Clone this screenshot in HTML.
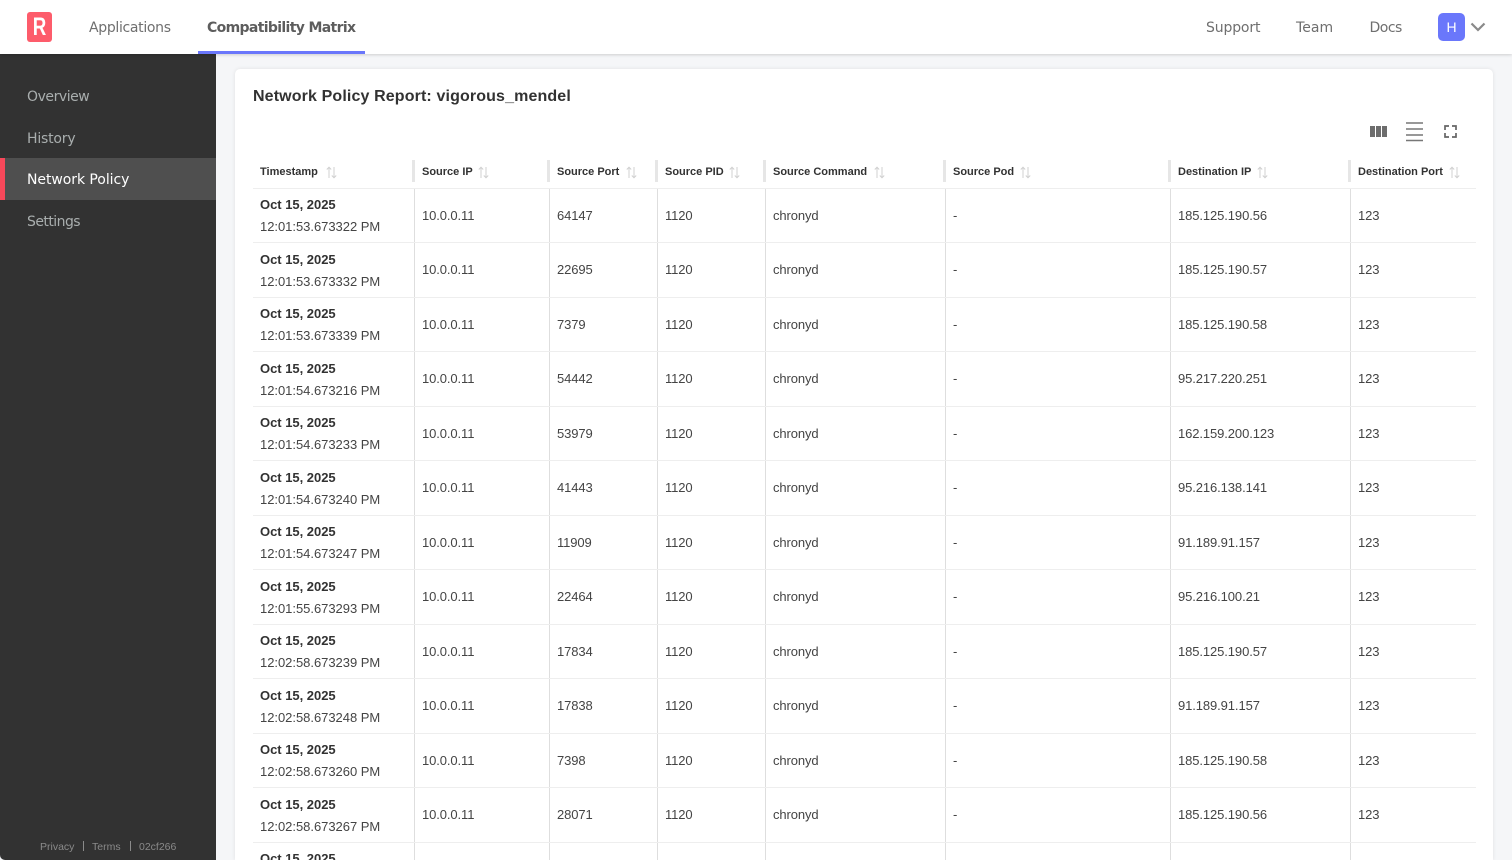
<!DOCTYPE html>
<html><head><meta charset="utf-8"><style>
*{box-sizing:border-box}
html,body{margin:0;padding:0;width:1512px;height:860px;overflow:hidden;background:#f5f6f8;font-family:"Liberation Sans",sans-serif}
#w{position:absolute;left:0;top:0;width:1512px;height:860px;overflow:hidden;background:#f5f6f8}
.a{position:absolute;white-space:nowrap}
.nav{font-family:"DejaVu Sans",sans-serif;font-size:14px;letter-spacing:-.15px;line-height:20px;color:#6f6f6f;margin-top:1px}
.side{font-family:"DejaVu Sans",sans-serif;font-size:14px;letter-spacing:-.2px;line-height:20px;color:#a9aeae;left:27px;margin-top:1px}
.h{font-size:11px;font-weight:bold;color:#323232;line-height:14px;top:164px;margin-top:1px;letter-spacing:0}
.d{font-size:13px;font-weight:bold;color:#323232;line-height:16px;left:260px;letter-spacing:-.02px;margin-top:1px}
.t{font-size:13px;color:#444;line-height:16px;left:260px;letter-spacing:-.03px;margin-top:1px}
.v{font-size:13px;color:#444;line-height:16px;letter-spacing:-.1px;margin-top:1px}
.l{position:absolute;left:253px;width:1223px;height:1px;background:#eeeeee}
.s{position:absolute;top:189px;width:1px;height:671px;background:#dedede}
.hs{position:absolute;top:160px;width:3px;height:22px;background:#e6e6e6}
.i{position:absolute;top:166px}
</style></head><body><div id="w">
<div class="a" style="left:235px;top:69px;width:1258px;height:791px;background:#fff;border-radius:5px 5px 0 0;box-shadow:0 0 4px rgba(0,0,0,.09)"></div>
<div class="a" style="left:0;top:54px;width:216px;height:806px;background:#323232;border-bottom-left-radius:5px"></div>
<div class="a" style="left:0;top:158px;width:216px;height:42px;background:#4f4f4f"></div>
<div class="a" style="left:0;top:158px;width:5px;height:42px;background:#f7485a"></div>
<div class="a" style="left:0;top:0;width:1512px;height:54px;background:#fff;box-shadow:0 1px 3px rgba(0,0,0,.16)"></div>
<div class="a" style="left:27px;top:12px;width:25px;height:30px;background:#fd5c6b;border-radius:3px"></div>
<div class="a" style="left:27px;top:12px;width:25px;height:30px;text-align:center;color:#fff;font-size:25px;font-weight:bold;line-height:30px;transform:scaleX(.75)">R</div>
<div class="a nav" style="left:89px;top:17px;letter-spacing:-.32px">Applications</div>
<div class="a nav" style="left:207px;top:17px;font-weight:bold;color:#5d5d5d;letter-spacing:-.65px">Compatibility Matrix</div>
<div class="a" style="left:198px;top:51px;width:167px;height:3px;background:#6a77fb"></div>
<div class="a nav" style="left:1206px;top:17px">Support</div>
<div class="a nav" style="left:1296px;top:17px;letter-spacing:.05px">Team</div>
<div class="a nav" style="left:1369.500px;top:17px;letter-spacing:-.5px">Docs</div>
<div class="a" style="left:1438px;top:13px;width:27px;height:28px;background:#6a77fb;border-radius:5px;color:#fff;font-size:14px;line-height:28px;text-align:center">H</div>
<svg class="a" style="left:1470px;top:22px" width="16" height="11" viewBox="0 0 16 11"><path d="M1.5 1.5L8 8L14.5 1.5" fill="none" stroke="#8a8a8a" stroke-width="2.2"/></svg>
<div class="a side" style="top:86px;letter-spacing:-.45px">Overview</div>
<div class="a side" style="top:128px">History</div>
<div class="a side" style="top:169px;color:#fff;letter-spacing:-.06px">Network Policy</div>
<div class="a side" style="top:211px;letter-spacing:-.55px">Settings</div>
<div class="a" style="left:40px;top:840px;font-size:10.5px;line-height:14px;color:#8a8a8a">Privacy</div>
<div class="a" style="left:83px;top:841px;width:1px;height:10px;background:#8a8a8a"></div>
<div class="a" style="left:92px;top:840px;font-size:10.5px;line-height:14px;color:#8a8a8a">Terms</div>
<div class="a" style="left:130px;top:841px;width:1px;height:10px;background:#8a8a8a"></div>
<div class="a" style="left:139px;top:840px;font-size:10.5px;line-height:14px;color:#8a8a8a">02cf266</div>
<div class="a" style="left:253px;top:87px;font-size:16px;line-height:20px;font-weight:bold;color:#323232;letter-spacing:.13px">Network Policy Report: vigorous_mendel</div>
<svg class="a" style="left:1370px;top:122px" width="90" height="20" viewBox="0 0 90 20"><path d="M0 4h5v11H0zM6 4h5v11H6zM12 4h5v11h-5z" fill="#6d6d6d"/><path d="M36 1h17M36 7h17M36 13h17M36 18.500h17" stroke="#777" stroke-width="1.600" fill="none"/><path d="M75 8V4h4M82 4h4v4M86 11v4h-4M79 15h-4v-4" stroke="#666" stroke-width="1.700" fill="none"/></svg>
<div class="a h" style="left:260px">Timestamp</div>
<div class="a h" style="left:422px">Source IP</div>
<div class="a h" style="left:557px">Source Port</div>
<div class="a h" style="left:665px">Source PID</div>
<div class="a h" style="left:773px">Source Command</div>
<div class="a h" style="left:953px">Source Pod</div>
<div class="a h" style="left:1178px">Destination IP</div>
<div class="a h" style="left:1358px">Destination Port</div>
<svg class="i" style="left:326px" width="11" height="13" viewBox="0 0 11 13"><path d="M3 12V1.500M.8 3.500L3 1.200L5.200 3.500M8 1v10.500M5.800 9.500L8 11.800L10.200 9.500" fill="none" stroke="#d0d0d0"/></svg>
<svg class="i" style="left:478px" width="11" height="13" viewBox="0 0 11 13"><path d="M3 12V1.500M.8 3.500L3 1.200L5.200 3.500M8 1v10.500M5.800 9.500L8 11.800L10.200 9.500" fill="none" stroke="#d0d0d0"/></svg>
<svg class="i" style="left:626px" width="11" height="13" viewBox="0 0 11 13"><path d="M3 12V1.500M.8 3.500L3 1.200L5.200 3.500M8 1v10.500M5.800 9.500L8 11.800L10.200 9.500" fill="none" stroke="#d0d0d0"/></svg>
<svg class="i" style="left:729px" width="11" height="13" viewBox="0 0 11 13"><path d="M3 12V1.500M.8 3.500L3 1.200L5.200 3.500M8 1v10.500M5.800 9.500L8 11.800L10.200 9.500" fill="none" stroke="#d0d0d0"/></svg>
<svg class="i" style="left:874px" width="11" height="13" viewBox="0 0 11 13"><path d="M3 12V1.500M.8 3.500L3 1.200L5.200 3.500M8 1v10.500M5.800 9.500L8 11.800L10.200 9.500" fill="none" stroke="#d0d0d0"/></svg>
<svg class="i" style="left:1020px" width="11" height="13" viewBox="0 0 11 13"><path d="M3 12V1.500M.8 3.500L3 1.200L5.200 3.500M8 1v10.500M5.800 9.500L8 11.800L10.200 9.500" fill="none" stroke="#d0d0d0"/></svg>
<svg class="i" style="left:1257px" width="11" height="13" viewBox="0 0 11 13"><path d="M3 12V1.500M.8 3.500L3 1.200L5.200 3.500M8 1v10.500M5.800 9.500L8 11.800L10.200 9.500" fill="none" stroke="#d0d0d0"/></svg>
<svg class="i" style="left:1449px" width="11" height="13" viewBox="0 0 11 13"><path d="M3 12V1.500M.8 3.500L3 1.200L5.200 3.500M8 1v10.500M5.800 9.500L8 11.800L10.200 9.500" fill="none" stroke="#d0d0d0"/></svg>
<div class="hs" style="left:412px"></div><div class="hs" style="left:547px"></div><div class="hs" style="left:655px"></div><div class="hs" style="left:763px"></div><div class="hs" style="left:943px"></div><div class="hs" style="left:1168px"></div><div class="hs" style="left:1348px"></div>
<div class="s" style="left:414px"></div><div class="s" style="left:549px"></div><div class="s" style="left:657px"></div><div class="s" style="left:765px"></div><div class="s" style="left:945px"></div><div class="s" style="left:1170px"></div><div class="s" style="left:1350px"></div>
<div class="l" style="top:188px"></div><div class="l" style="top:242px"></div><div class="l" style="top:297px"></div><div class="l" style="top:351px"></div><div class="l" style="top:406px"></div><div class="l" style="top:460px"></div><div class="l" style="top:515px"></div><div class="l" style="top:569px"></div><div class="l" style="top:624px"></div><div class="l" style="top:678px"></div><div class="l" style="top:733px"></div><div class="l" style="top:787px"></div><div class="l" style="top:842px"></div>

<div class="a d" style="top:196px">Oct 15, 2025</div><div class="a t" style="top:218px">12:01:53.673322 PM</div>
<div class="a v" style="left:422px;top:207px">10.0.0.11</div><div class="a v" style="left:557px;top:207px">64147</div><div class="a v" style="left:665px;top:207px">1120</div><div class="a v" style="left:773px;top:207px">chronyd</div><div class="a v" style="left:953px;top:207px">-</div><div class="a v" style="left:1178px;top:207px">185.125.190.56</div><div class="a v" style="left:1358px;top:207px">123</div>

<div class="a d" style="top:251px">Oct 15, 2025</div><div class="a t" style="top:273px">12:01:53.673332 PM</div>
<div class="a v" style="left:422px;top:261px">10.0.0.11</div><div class="a v" style="left:557px;top:261px">22695</div><div class="a v" style="left:665px;top:261px">1120</div><div class="a v" style="left:773px;top:261px">chronyd</div><div class="a v" style="left:953px;top:261px">-</div><div class="a v" style="left:1178px;top:261px">185.125.190.57</div><div class="a v" style="left:1358px;top:261px">123</div>

<div class="a d" style="top:305px">Oct 15, 2025</div><div class="a t" style="top:327px">12:01:53.673339 PM</div>
<div class="a v" style="left:422px;top:316px">10.0.0.11</div><div class="a v" style="left:557px;top:316px">7379</div><div class="a v" style="left:665px;top:316px">1120</div><div class="a v" style="left:773px;top:316px">chronyd</div><div class="a v" style="left:953px;top:316px">-</div><div class="a v" style="left:1178px;top:316px">185.125.190.58</div><div class="a v" style="left:1358px;top:316px">123</div>

<div class="a d" style="top:360px">Oct 15, 2025</div><div class="a t" style="top:382px">12:01:54.673216 PM</div>
<div class="a v" style="left:422px;top:370px">10.0.0.11</div><div class="a v" style="left:557px;top:370px">54442</div><div class="a v" style="left:665px;top:370px">1120</div><div class="a v" style="left:773px;top:370px">chronyd</div><div class="a v" style="left:953px;top:370px">-</div><div class="a v" style="left:1178px;top:370px">95.217.220.251</div><div class="a v" style="left:1358px;top:370px">123</div>

<div class="a d" style="top:414px">Oct 15, 2025</div><div class="a t" style="top:436px">12:01:54.673233 PM</div>
<div class="a v" style="left:422px;top:425px">10.0.0.11</div><div class="a v" style="left:557px;top:425px">53979</div><div class="a v" style="left:665px;top:425px">1120</div><div class="a v" style="left:773px;top:425px">chronyd</div><div class="a v" style="left:953px;top:425px">-</div><div class="a v" style="left:1178px;top:425px">162.159.200.123</div><div class="a v" style="left:1358px;top:425px">123</div>

<div class="a d" style="top:469px">Oct 15, 2025</div><div class="a t" style="top:491px">12:01:54.673240 PM</div>
<div class="a v" style="left:422px;top:479px">10.0.0.11</div><div class="a v" style="left:557px;top:479px">41443</div><div class="a v" style="left:665px;top:479px">1120</div><div class="a v" style="left:773px;top:479px">chronyd</div><div class="a v" style="left:953px;top:479px">-</div><div class="a v" style="left:1178px;top:479px">95.216.138.141</div><div class="a v" style="left:1358px;top:479px">123</div>

<div class="a d" style="top:523px">Oct 15, 2025</div><div class="a t" style="top:545px">12:01:54.673247 PM</div>
<div class="a v" style="left:422px;top:534px">10.0.0.11</div><div class="a v" style="left:557px;top:534px">11909</div><div class="a v" style="left:665px;top:534px">1120</div><div class="a v" style="left:773px;top:534px">chronyd</div><div class="a v" style="left:953px;top:534px">-</div><div class="a v" style="left:1178px;top:534px">91.189.91.157</div><div class="a v" style="left:1358px;top:534px">123</div>

<div class="a d" style="top:578px">Oct 15, 2025</div><div class="a t" style="top:600px">12:01:55.673293 PM</div>
<div class="a v" style="left:422px;top:588px">10.0.0.11</div><div class="a v" style="left:557px;top:588px">22464</div><div class="a v" style="left:665px;top:588px">1120</div><div class="a v" style="left:773px;top:588px">chronyd</div><div class="a v" style="left:953px;top:588px">-</div><div class="a v" style="left:1178px;top:588px">95.216.100.21</div><div class="a v" style="left:1358px;top:588px">123</div>

<div class="a d" style="top:632px">Oct 15, 2025</div><div class="a t" style="top:654px">12:02:58.673239 PM</div>
<div class="a v" style="left:422px;top:643px">10.0.0.11</div><div class="a v" style="left:557px;top:643px">17834</div><div class="a v" style="left:665px;top:643px">1120</div><div class="a v" style="left:773px;top:643px">chronyd</div><div class="a v" style="left:953px;top:643px">-</div><div class="a v" style="left:1178px;top:643px">185.125.190.57</div><div class="a v" style="left:1358px;top:643px">123</div>

<div class="a d" style="top:687px">Oct 15, 2025</div><div class="a t" style="top:709px">12:02:58.673248 PM</div>
<div class="a v" style="left:422px;top:697px">10.0.0.11</div><div class="a v" style="left:557px;top:697px">17838</div><div class="a v" style="left:665px;top:697px">1120</div><div class="a v" style="left:773px;top:697px">chronyd</div><div class="a v" style="left:953px;top:697px">-</div><div class="a v" style="left:1178px;top:697px">91.189.91.157</div><div class="a v" style="left:1358px;top:697px">123</div>

<div class="a d" style="top:741px">Oct 15, 2025</div><div class="a t" style="top:763px">12:02:58.673260 PM</div>
<div class="a v" style="left:422px;top:752px">10.0.0.11</div><div class="a v" style="left:557px;top:752px">7398</div><div class="a v" style="left:665px;top:752px">1120</div><div class="a v" style="left:773px;top:752px">chronyd</div><div class="a v" style="left:953px;top:752px">-</div><div class="a v" style="left:1178px;top:752px">185.125.190.58</div><div class="a v" style="left:1358px;top:752px">123</div>

<div class="a d" style="top:796px">Oct 15, 2025</div><div class="a t" style="top:818px">12:02:58.673267 PM</div>
<div class="a v" style="left:422px;top:806px">10.0.0.11</div><div class="a v" style="left:557px;top:806px">28071</div><div class="a v" style="left:665px;top:806px">1120</div><div class="a v" style="left:773px;top:806px">chronyd</div><div class="a v" style="left:953px;top:806px">-</div><div class="a v" style="left:1178px;top:806px">185.125.190.56</div><div class="a v" style="left:1358px;top:806px">123</div>

<div class="a d" style="top:850px">Oct 15, 2025</div>
</div></body></html>
